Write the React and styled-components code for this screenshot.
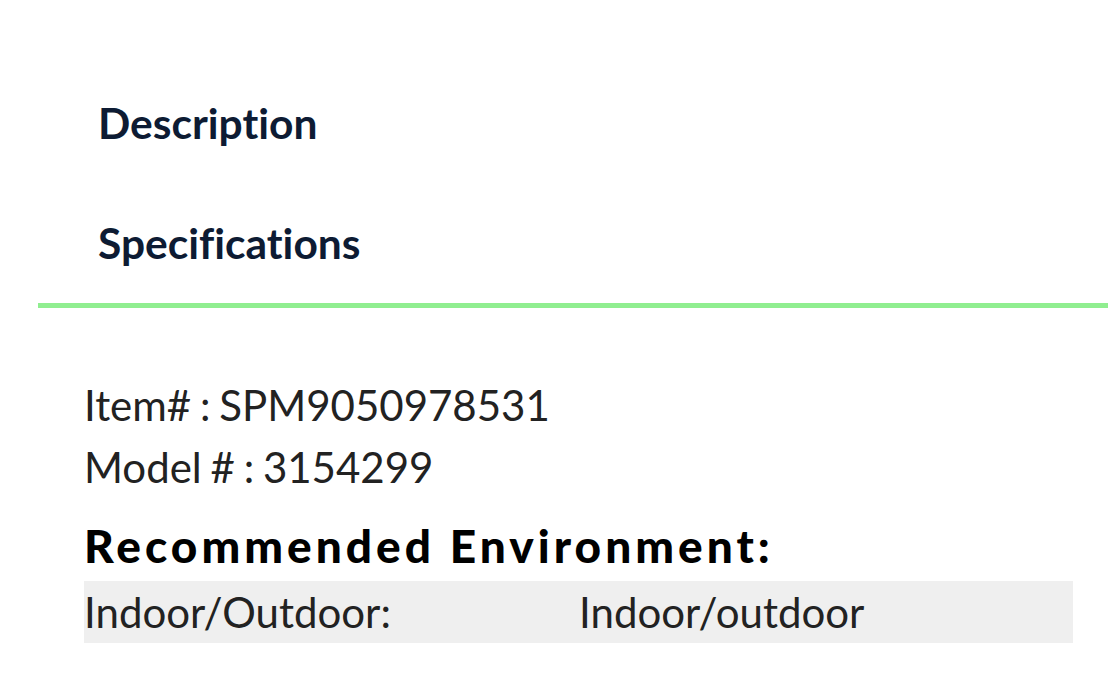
import styled, { createGlobalStyle } from "styled-components";

const GlobalStyle = createGlobalStyle`
  html, body {
    margin: 0;
    padding: 0;
    background: #ffffff;
    font-family: Lato, "Open Sans", sans-serif;
    font-variant-ligatures: none;
    overflow: hidden;
  }
`;

const Page = styled.div`
  width: 1108px;
  height: 698px;
  overflow: hidden;
  padding-top: 63px;
  box-sizing: border-box;
`;

const TabList = styled.div`
  display: flex;
  flex-direction: column;
  padding-left: 60px;
  border-bottom: 5px solid #90ee90;
  margin-left: 38px;
`;

const Tab = styled.div`
  font-size: 42.5px;
  font-weight: 700;
  color: #0d1b33;
  line-height: 120px;
  height: 120px;
`;

const Panel = styled.div`
  padding: 66px 35px 0 84px;
  color: #222222;
`;

const InfoLine = styled.div`
  font-size: 42px;
  line-height: 62px;
  word-spacing: -2px;
`;

const SectionTitle = styled.h3`
  margin: 20px 0 8px;
  font-size: 46px;
  line-height: 1.2;
  font-weight: 900;
  letter-spacing: 4px;
  color: #000000;
`;

const SpecRow = styled.div`
  display: grid;
  grid-template-columns: 495px 1fr;
  background: #efefef;
  font-size: 42px;
  line-height: 62px;
`;

export default function App() {
  return (
    <Page>
      <GlobalStyle />
      <TabList>
        <Tab>Description</Tab>
        <Tab>Specifications</Tab>
      </TabList>
      <Panel>
        <InfoLine>Item# : SPM9050978531</InfoLine>
        <InfoLine>Model # : 3154299</InfoLine>
        <SectionTitle>Recommended Environment:</SectionTitle>
        <SpecRow>
          <span>Indoor/Outdoor:</span>
          <span>Indoor/outdoor</span>
        </SpecRow>
      </Panel>
    </Page>
  );
}
